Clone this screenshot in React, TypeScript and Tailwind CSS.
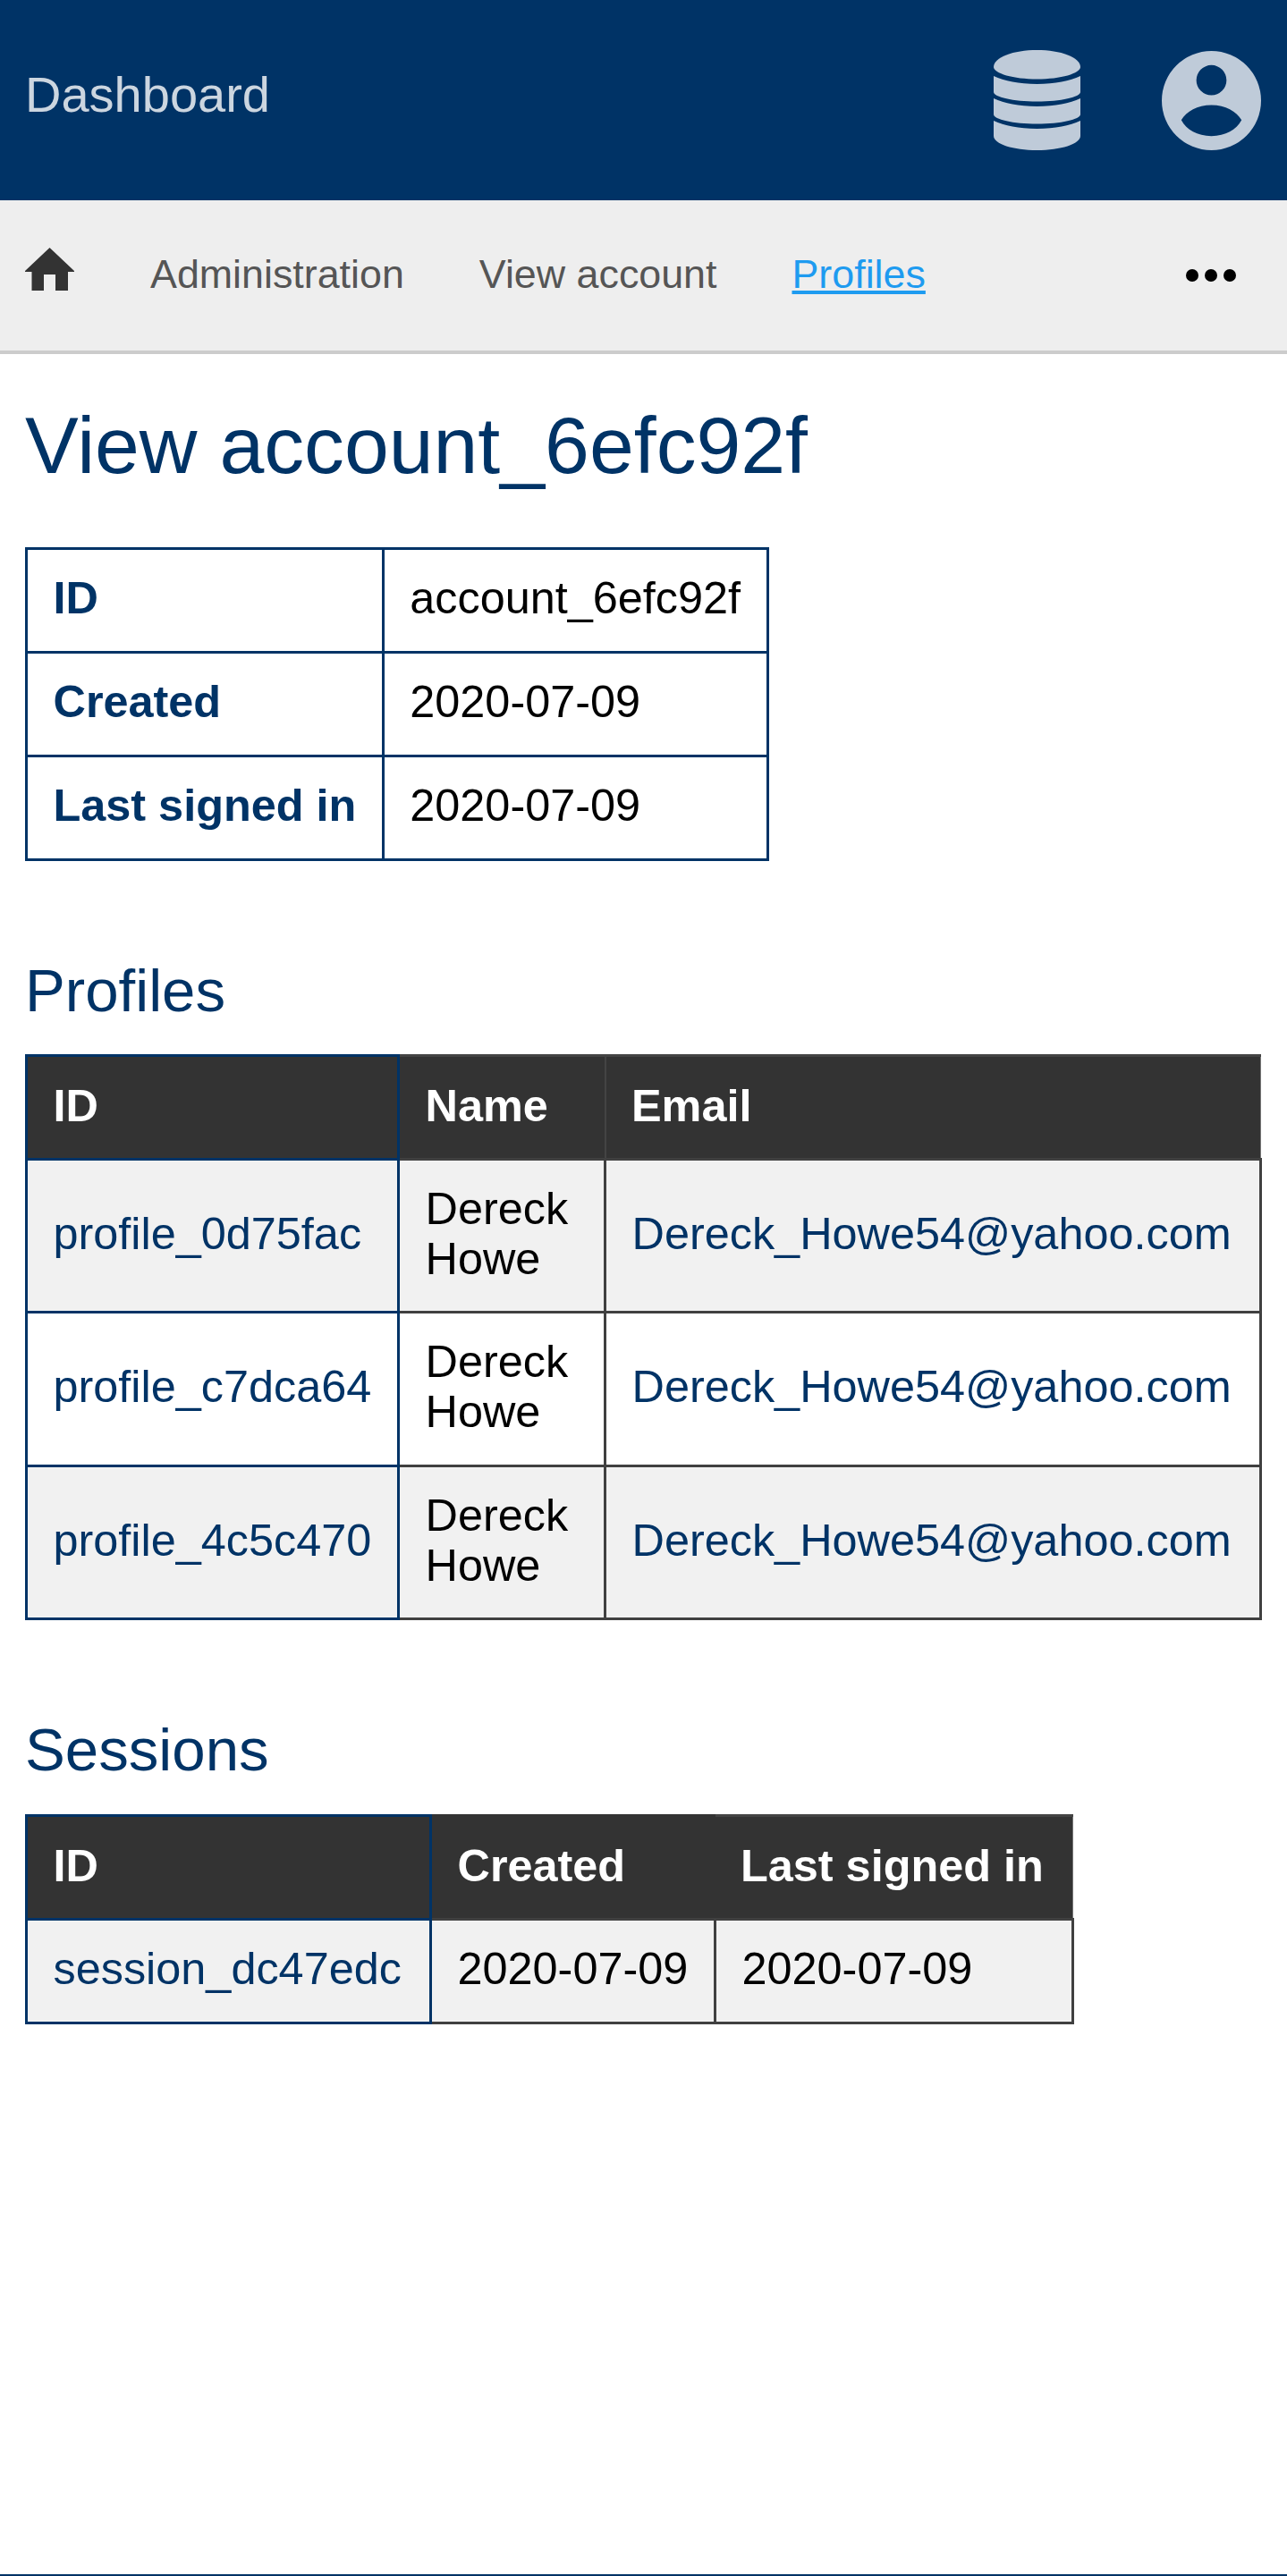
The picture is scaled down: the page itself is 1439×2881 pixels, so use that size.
import React from "react";

function Home() {
  return (
    <svg viewBox="0 0 55 48" className="w-[55px] h-[48px] block" fill="#333">
      <path d="M27.5 0 L55 26 L55 27 L48 27 L48 48 L34 48 L34 30 L21 30 L21 48 L7.500 48 L7.500 27 L0 27 L0 26 Z" />
    </svg>
  );
}

function Db() {
  return (
    <svg viewBox="0 0 97 113" className="w-[97px] h-[113px] block" fill="#bfcbd9">
      <path d="M48.500 0C75 0 97 8 97 19C97 26 75 32.500 48.500 32.500C22 32.500 0 26 0 19C0 8 22 0 48.500 0Z" />
      <path d="M0 29C12 34.500 28 38 48.500 38C69 38 85 34.500 97 29V47C97 52.500 75 57.500 48.500 57.500C22 57.500 0 52.500 0 47Z" />
      <path d="M0 54C12 59.500 28 63 48.500 63C69 63 85 59.500 97 54V72C97 77.500 75 82.500 48.500 82.500C22 82.500 0 77.500 0 72Z" />
      <path d="M0 79C12 84.500 28 88 48.500 88C69 88 85 84.500 97 79V96C97 105 75 112 48.500 112C22 112 0 105 0 96Z" />
    </svg>
  );
}

function User() {
  return (
    <svg viewBox="0 0 112 112" className="w-[111px] h-[111px] block">
      <path
        fill="#bfcbd9"
        fillRule="evenodd"
        d="M56 0a56 56 0 1 0 0 112a56 56 0 1 0 0-112ZM56 16a17 17 0 1 1 0 34a17 17 0 1 1 0-34ZM56 61C72 61 84 68 90 78C84 89 72 96 56 96C40 96 28 89 22 78C28 68 40 61 56 61Z"
      />
    </svg>
  );
}

function Dots() {
  return (
    <svg viewBox="0 0 56 14" className="w-[56px] h-[14px] block" fill="#000">
      <circle cx="7" cy="7" r="7" />
      <circle cx="28" cy="7" r="7" />
      <circle cx="49" cy="7" r="7" />
    </svg>
  );
}

const rows = ["profile_0d75fac", "profile_c7dca64", "profile_4c5c470"];

const thBase = "bg-[#333] text-white text-left font-bold px-[28.5px] pt-[26.5px] pb-[30.5px]";
const thFirst = thBase + " border-[3px] border-[#003366]";
const thMid = thBase + " border-t-[3px] border-t-[#444] border-b border-b-[#888] border-r-2 border-r-[#444]";
const thPlain = thBase + " border-t-[3px] border-t-[#333] border-b border-b-[#888]";
const thLast = thBase + " border-t-[3px] border-t-[#444] border-b border-b-[#888] border-r border-r-[#777]";
const tdFirst = "border-[3px] border-[#003366] px-[28.5px] pt-[26px] pb-[30.400px] text-[#003366]";
const tdRest = "border-[3px] border-[#404040] px-[28.5px] pt-[26px] pb-[30.400px]";
const infoTh = "border-[3px] border-[#003366] text-[#003366] text-left font-bold px-[28.5px] pt-[26px] pb-[31px] whitespace-nowrap";
const infoTd = "border-[3px] border-[#003366] px-[28.5px] pt-[26px] pb-[31px] whitespace-nowrap";

export default function App() {
  return (
    <div className="min-h-[2881px] flex flex-col bg-white text-black font-['Liberation_Sans',Arial,sans-serif] text-[50.4px] leading-[56px]">
      <header className="h-[224px] bg-[#003366] flex items-center pl-[28px]">
        <div className="text-[56px] text-[#ccd6e0] flex-1 pb-[12px]">Dashboard</div>
        <div className="mr-[91px]">
          <Db />
        </div>
        <div className="mr-[29px]">
          <User />
        </div>
      </header>

      <nav className="h-[172px] bg-[#eeeeee] border-b-4 border-[#cccccc] flex items-center pl-[28px] text-[44.8px] text-[#555555]">
        <div className="mb-[14px]">
          <Home />
        </div>
        <a className="ml-[85px] mb-[4px]">Administration</a>
        <a className="ml-[84px] mb-[4px]">View account</a>
        <a className="ml-[84px] mb-[4px] text-[#1e9bf0] underline">Profiles</a>
        <div className="ml-auto mr-[57px]">
          <Dots />
        </div>
      </nav>

      <main className="px-[28px] flex-1">
        <h1 className="text-[89.6px] leading-[100px] text-[#003366] mt-[52px] mb-[64px]">View account_6efc92f</h1>

        <table className="border-collapse">
          <tbody>
            <tr>
              <th className={infoTh}>ID</th>
              <td className={infoTd}>account_6efc92f</td>
            </tr>
            <tr>
              <th className={infoTh}>Created</th>
              <td className={infoTd}>2020-07-09</td>
            </tr>
            <tr>
              <th className={infoTh}>Last signed in</th>
              <td className={infoTd}>2020-07-09</td>
            </tr>
          </tbody>
        </table>

        <h2 className="text-[67.2px] leading-[76px] text-[#003366] mt-[107px] mb-[33px]">Profiles</h2>

        <table className="border-collapse w-full">
          <thead>
            <tr>
              <th className={thFirst + " w-[416px]"}>ID</th>
              <th className={thMid + " w-[231px]"}>Name</th>
              <th className={thLast}>Email</th>
            </tr>
          </thead>
          <tbody>
            {rows.map((r, i) => (
              <tr key={r} className={i % 2 === 0 ? "bg-[#f1f1f1]" : "bg-white"}>
                <td className={tdFirst}>{r}</td>
                <td className={tdRest}>Dereck Howe</td>
                <td className={tdRest + " text-[#003366]"}>Dereck_Howe54@yahoo.com</td>
              </tr>
            ))}
          </tbody>
        </table>

        <h2 className="text-[67.2px] leading-[76px] text-[#003366] mt-[107px] mb-[34px]">Sessions</h2>

        <table className="border-collapse">
          <thead>
            <tr>
              <th className={thFirst + " w-[452px]"}>ID</th>
              <th className={thPlain + " w-[318px]"}>Created</th>
              <th className={thLast + " w-[400px]"}>Last signed in</th>
            </tr>
          </thead>
          <tbody>
            <tr className="bg-[#f1f1f1]">
              <td className={tdFirst}>session_dc47edc</td>
              <td className={tdRest}>2020-07-09</td>
              <td className={tdRest}>2020-07-09</td>
            </tr>
          </tbody>
        </table>
      </main>

      <footer className="h-[2px] bg-[#003366]" />
    </div>
  );
}
